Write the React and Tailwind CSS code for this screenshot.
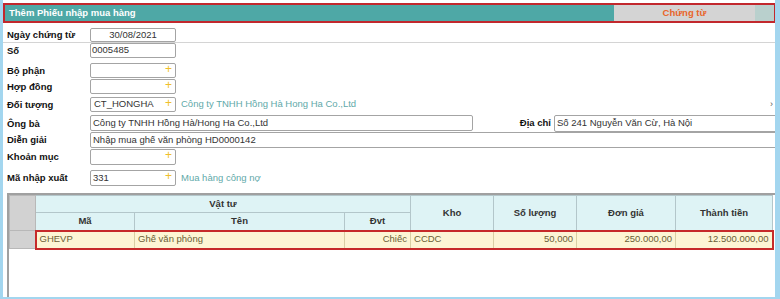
import React from "react";

const Plus = () => (
  <span className="text-[#f0bf2c] text-[12px] leading-none">+</span>
);

function Input({ w, value, plus, center, h = "h-[15px]", extra = "" }) {
  return (
    <div
      className={`${w} ${h} ${extra} shrink-0 border border-[#a4a4a4] rounded-[2px] bg-white flex items-center px-[1px] text-[9.5px] text-[#333]`}
    >
      <span className={`flex-1 ${center ? "text-center" : ""} whitespace-nowrap overflow-hidden`}>{value}</span>
      {plus && <span className="pr-[2px] -mt-[1px]"><Plus /></span>}
    </div>
  );
}

function Row({ h, mt, label, children, items = "items-center" }) {
  return (
    <div className={`${h} ${mt} flex ${items}`}>
      <div className="w-[87px] shrink-0 pl-[4px] pt-[1px] font-bold text-[9.5px] text-[#111] whitespace-nowrap self-center">{label}</div>
      {children}
    </div>
  );
}

export default function App() {
  const th = "border border-[#b3c6ca] bg-[#def3f5] font-bold text-[9.5px] text-[#333] text-center p-0";
  const td = "border-y-2 border-y-[#c62a2a] border-x border-x-[#d9cfa4] bg-[#fdf5d4] text-[9.5px] text-[#6b5d35] px-[3px] p-0";
  return (
    <div className="w-[780px] h-[299px] bg-[#a3d6ef] font-['Liberation_Sans',Arial,sans-serif] overflow-hidden">
      <div className="ml-[3px] w-[772px] h-[297px] bg-white pt-[3px] overflow-hidden">
        {/* Header */}
        <div className="h-[20px] w-[773px] border-2 border-[#c2282d] flex bg-[#4ea8a6]">
          <div className="w-[609px] flex items-center pl-[4px] text-white font-bold text-[9.5px]">Thêm Phiếu nhập mua hàng</div>
          <div className="w-[141px] bg-[#d4d4d4] flex items-center justify-center text-[#e8652a] font-bold text-[9.5px]">Chứng từ</div>
          <div className="flex-1 bg-[#b9d0cd]"></div>
        </div>

        {/* Form */}
        <div className="flex flex-col">
          <Row h="h-[14px]" mt="mt-[5px]" label="Ngày chứng từ">
            <Input w="w-[86px]" h="h-[14px]" value="30/08/2021" center />
          </Row>
          <div className="h-[1px] bg-[#d4d4d4]"></div>
          <Row h="h-[15px]" mt="mt-0" label="Số">
            <Input w="w-[86px]" h="h-[15px]" value="0005485" />
          </Row>
          <Row h="h-[15px]" mt="mt-[5px]" label="Bộ phận">
            <Input w="w-[86px]" value="" plus />
          </Row>
          <Row h="h-[15px]" mt="mt-[1px]" label="Hợp đồng">
            <Input w="w-[86px]" value="" plus />
          </Row>
          <Row h="h-[15px]" mt="mt-[3px]" label="Đối tượng">
            <Input w="w-[86px]" value={<span className="pl-[2px]">CT_HONGHA</span>} plus />
            <span className="ml-[5px] text-[9.5px] text-[#5fa9a9] whitespace-nowrap">Công ty TNHH Hồng Hà Hong Ha Co.,Ltd</span>
            <span className="ml-auto mr-[2px] text-[9px] text-[#555] leading-none">›</span>
          </Row>
          <Row h="h-[17px]" mt="mt-[3px]" label="Ông bà" items="items-start">
            <Input w="w-[383px]" h="h-[16px]" value={<span className="pl-[1px]">Công ty TNHH Hồng Hà/Hong Ha Co.,Ltd</span>} />
            <div className="w-[81px] shrink-0 text-right pr-[3px] font-bold text-[9.5px] text-[#111] self-center">Địa chỉ</div>
            <Input w="w-[230px]" h="h-[17px]" value={<span className="pl-[1px]">Số 241 Nguyễn Văn Cừ, Hà Nội</span>} />
          </Row>
          <Row h="h-[16px]" mt="mt-0" label="Diễn giải">
            <Input w="w-[700px]" h="h-[16px]" value={<span className="pl-[1px]">Nhập mua ghế văn phòng HD0000142</span>} />
          </Row>
          <Row h="h-[16px]" mt="mt-[1px]" label="Khoản mục">
            <Input w="w-[86px]" h="h-[16px]" value="" plus />
          </Row>
          <Row h="h-[16px]" mt="mt-[5px]" label="Mã nhập xuất">
            <Input w="w-[86px]" h="h-[16px]" value={<span className="pl-[1px]">331</span>} plus />
            <span className="ml-[5px] text-[9.5px] text-[#5fa9a9] whitespace-nowrap">Mua hàng công nợ</span>
          </Row>
        </div>

        {/* Table */}
        <div className="mt-[7px] ml-[4px] w-[770px] h-[104px] border-l-2 border-t-2 border-[#a0a0a0]">
          <table className="border-collapse table-fixed w-[763px]">
            <colgroup>
              <col className="w-[26px]" />
              <col className="w-[99px]" />
              <col className="w-[210px]" />
              <col className="w-[66px]" />
              <col className="w-[83px]" />
              <col className="w-[83px]" />
              <col className="w-[99px]" />
              <col className="w-[97px]" />
            </colgroup>
            <thead>
              <tr className="h-[17px]">
                <th rowSpan={2} className="border border-[#b8b8b8] bg-[#d2d2d2] p-0"></th>
                <th colSpan={3} className={th}>Vật tư</th>
                <th rowSpan={2} className={th}>Kho</th>
                <th rowSpan={2} className={th}>Số lượng</th>
                <th rowSpan={2} className={th}>Đơn giá</th>
                <th rowSpan={2} className={th}>Thành tiền</th>
              </tr>
              <tr className="h-[18px]">
                <th className={th}>Mã</th>
                <th className={th}>Tên</th>
                <th className={th}>Đvt</th>
              </tr>
            </thead>
            <tbody>
              <tr className="h-[18px]">
                <td className="border border-[#b8b8b8] bg-[#d2d2d2] p-0"></td>
                <td className={`${td} border-l-2 border-l-[#c62a2a]`}>GHEVP</td>
                <td className={td}>Ghế văn phòng</td>
                <td className={`${td} text-right`}>Chiếc</td>
                <td className={td}>CCDC</td>
                <td className={`${td} text-right`}>50,000</td>
                <td className={`${td} text-right`}>250.000,00</td>
                <td className={`${td} text-right border-r-2 border-r-[#c62a2a]`}>12.500.000,00</td>
              </tr>
            </tbody>
          </table>
        </div>
      </div>
    </div>
  );
}
